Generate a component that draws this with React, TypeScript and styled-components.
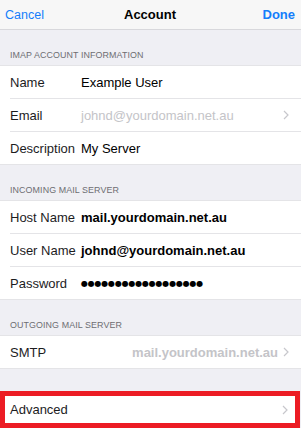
import React from "react";
import styled, { createGlobalStyle } from "styled-components";

const GlobalStyle = createGlobalStyle`
  html, body {
    margin: 0;
    padding: 0;
    background: #efeff4;
  }
  body {
    font-family: "Liberation Sans", Arial, sans-serif;
    -webkit-font-smoothing: antialiased;
  }
`;

const Screen = styled.div`
  width: 301px;
  height: 431px;
  overflow: hidden;
  background: #efeff4;
  display: flex;
  flex-direction: column;
`;

const NavBar = styled.div`
  height: 29px;
  flex-shrink: 0;
  display: flex;
  align-items: center;
  justify-content: space-between;
  padding: 0 6px 0 5px;
  background: #f7f7f7;
  border-bottom: 1px solid #d8d8dc;
`;

const NavButton = styled.span<{ $bold?: boolean }>`
  color: #147efb;
  font-size: ${(p) => (p.$bold ? "13px" : "12.5px")};
  font-weight: ${(p) => (p.$bold ? 700 : 400)};
  width: 50px;
  text-align: ${(p) => (p.$bold ? "right" : "left")};
`;

const NavTitle = styled.span`
  font-size: 13px;
  font-weight: 700;
  color: #000;
`;

const SectionHeader = styled.div`
  height: 35px;
  flex-shrink: 0;
  display: flex;
  align-items: flex-end;
  padding: 0 0 5px 10px;
  box-sizing: border-box;
  font-size: 8.9px;
  color: #6d6d72;
  letter-spacing: 0.1px;
  text-transform: uppercase;
`;

const Group = styled.div`
  background: #fff;
  border-top: 1px solid #e4e4e7;
  border-bottom: 1px solid #e4e4e7;
  flex-shrink: 0;
`;

const Row = styled.div<{ $last?: boolean }>`
  height: 32px;
  display: flex;
  align-items: center;
  margin-left: 10px;
  padding-right: 12px;
  border-bottom: ${(p) => (p.$last ? "none" : "1px solid #e4e4e7")};
`;

const Label = styled.span`
  width: 71px;
  flex-shrink: 0;
  font-size: 13px;
  color: #1c1c1e;
  white-space: nowrap;
`;

const Value = styled.span<{ $tone?: "plain" | "strong" | "muted" | "mutedStrong" }>`
  flex: 1;
  font-size: 13px;
  white-space: nowrap;
  color: ${(p) =>
    p.$tone === "muted" || p.$tone === "mutedStrong" ? "#c4c4c8" : "#000"};
  font-weight: ${(p) =>
    p.$tone === "strong" || p.$tone === "mutedStrong" ? 700 : 400};
  text-align: ${(p) => (p.$tone === "mutedStrong" ? "right" : "left")};
`;

const Dots = styled.span`
  flex: 1;
  font-family: "DejaVu Sans", sans-serif;
  font-size: 8px;
  letter-spacing: -0.2px;
  color: #000;
`;

const Chevron = styled.svg`
  width: 6px;
  height: 10px;
  margin-left: 5px;
  flex-shrink: 0;
`;

const Spacer = styled.div`
  height: 22px;
  flex-shrink: 0;
`;

const Highlight = styled.div`
  border: 5px solid #ec1c24;
  background: #fff;
  margin: 0 1px 0 0;
  flex-shrink: 0;
`;

const AdvancedRow = styled.div`
  height: 27px;
  display: flex;
  align-items: center;
  padding: 0 7px 0 5px;
`;

const Filler = styled.div`
  flex: 1;
  background: #fff;
`;

const Arrow = () => (
  <Chevron viewBox="0 0 6 10">
    <path d="M1 1 L5 5 L1 9" fill="none" stroke="#c7c7cc" strokeWidth="1.2" />
  </Chevron>
);

const App: React.FC = () => {
  return (
    <>
      <GlobalStyle />
      <Screen>
        <NavBar>
          <NavButton>Cancel</NavButton>
          <NavTitle>Account</NavTitle>
          <NavButton $bold>Done</NavButton>
        </NavBar>

        <SectionHeader>IMAP Account Information</SectionHeader>
        <Group>
          <Row>
            <Label>Name</Label>
            <Value>Example User</Value>
          </Row>
          <Row>
            <Label>Email</Label>
            <Value $tone="muted">johnd@yourdomain.net.au</Value>
            <Arrow />
          </Row>
          <Row $last>
            <Label>Description</Label>
            <Value>My Server</Value>
          </Row>
        </Group>

        <SectionHeader>Incoming Mail Server</SectionHeader>
        <Group>
          <Row>
            <Label>Host Name</Label>
            <Value $tone="strong">mail.yourdomain.net.au</Value>
          </Row>
          <Row>
            <Label>User Name</Label>
            <Value $tone="strong">johnd@yourdomain.net.au</Value>
          </Row>
          <Row $last>
            <Label>Password</Label>
            <Dots>{"●".repeat(18)}</Dots>
          </Row>
        </Group>

        <SectionHeader>Outgoing Mail Server</SectionHeader>
        <Group>
          <Row $last>
            <Label>SMTP</Label>
            <Value $tone="mutedStrong">mail.yourdomain.net.au</Value>
            <Arrow />
          </Row>
        </Group>

        <Spacer />
        <Highlight>
          <AdvancedRow>
            <Label>Advanced</Label>
            <Value />
            <Arrow />
          </AdvancedRow>
        </Highlight>
        <Filler />
      </Screen>
    </>
  );
};

export default App;
